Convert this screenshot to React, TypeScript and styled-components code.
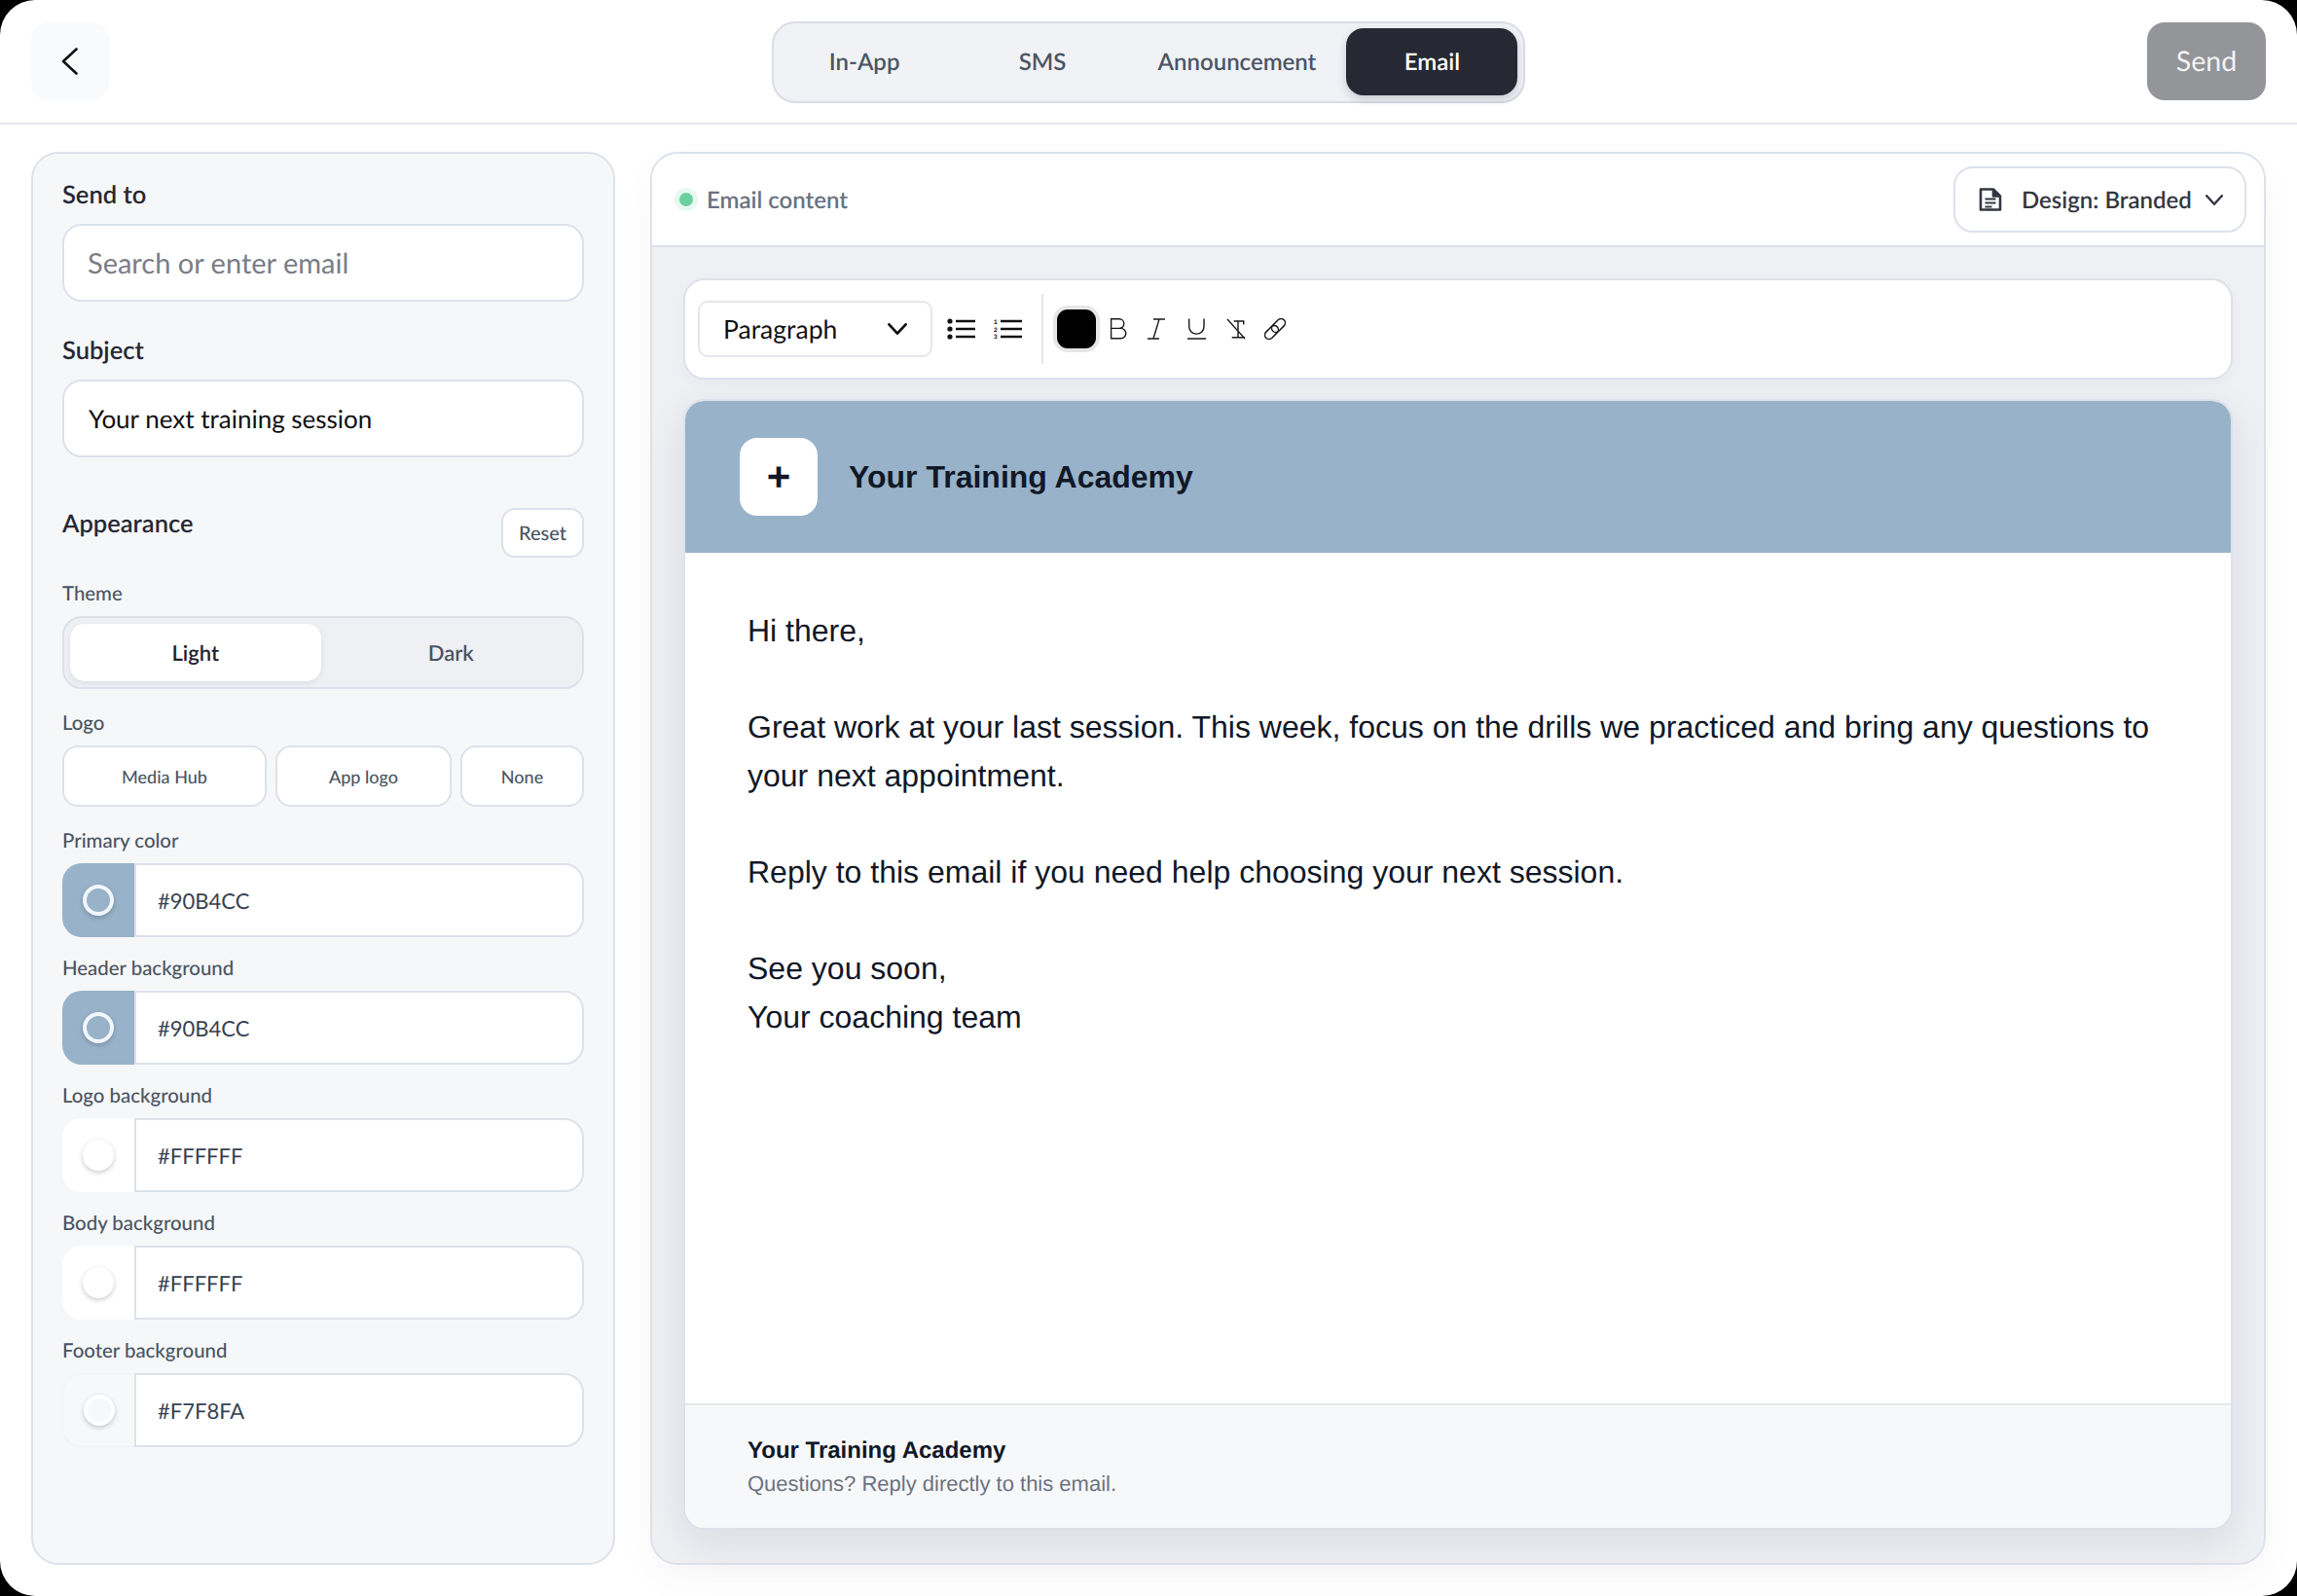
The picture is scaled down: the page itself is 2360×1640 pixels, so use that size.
import React from "react";
import styled, { createGlobalStyle } from "styled-components";

const Global = createGlobalStyle`
  html, body { margin: 0; padding: 0; background: #000; }
  * { box-sizing: border-box; }
  body {
    font-family: "Lato", "Liberation Sans", sans-serif;
    text-rendering: geometricPrecision;
  }
`;

const Screen = styled.div`
  width: 2360px;
  height: 1640px;
  background: #fff;
  border-radius: 36px;
  overflow: hidden;
  display: flex;
  flex-direction: column;
`;

const TopBar = styled.header`
  height: 128px;
  flex: none;
  border-bottom: 2px solid #e6e8ed;
  display: grid;
  grid-template-columns: 1fr auto 1fr;
  align-items: center;
  padding: 0 32px;
`;

const BackButton = styled.button`
  width: 80px;
  height: 80px;
  border: none;
  border-radius: 18px;
  background: #f9fafb;
  display: flex;
  align-items: center;
  justify-content: center;
  padding: 0;
`;

const Tabs = styled.nav`
  display: flex;
  gap: 8px;
  height: 84px;
  margin-top: 2px;
  padding: 5px 6px 6px;
  background: #f1f2f6;
  border: 2px solid #d9dde6;
  border-radius: 24px;
`;

const Tab = styled.div<{ $active?: boolean }>`
  min-width: ${(p) => (p.$active ? 176 : 175)}px;
  padding: 0 23px;
  display: flex;
  align-items: center;
  justify-content: center;
  border-radius: 18px;
  font-size: 24px;
  font-weight: 600;
  color: ${(p) => (p.$active ? "#fff" : "#4b5563")};
  background: ${(p) => (p.$active ? "#262833" : "transparent")};
  box-shadow: ${(p) => (p.$active ? "0 4px 10px rgba(17,24,39,.18)" : "none")};
`;

const SendButton = styled.button`
  justify-self: end;
  width: 122px;
  height: 80px;
  border: none;
  border-radius: 18px;
  background: #949599;
  color: #f4f4f5;
  font-family: inherit;
  font-size: 28.5px;
  font-weight: 400;
  text-rendering: geometricPrecision;
`;

const Main = styled.main`
  flex: 1;
  min-height: 0;
  display: flex;
  gap: 36px;
  padding: 28px 32px 32px;
`;

const SidePanel = styled.aside`
  width: 600px;
  flex: none;
  background: #f6f7f9;
  border: 2px solid #dde1ea;
  border-radius: 28px;
  padding: 26px 30px;
  display: flex;
  flex-direction: column;
`;

const Heading = styled.div<{ $top?: number }>`
  font-size: 25.5px;
  line-height: 33px;
  font-weight: 600;
  color: #262833;
  margin-top: ${(p) => p.$top ?? 0}px;
`;

const TextBox = styled.div<{ $placeholder?: boolean }>`
  height: 80px;
  margin-top: 13px;
  background: #fff;
  border: 2px solid #dde1ea;
  border-radius: 20px;
  padding: 0 ${(p) => (p.$placeholder ? 24 : 25)}px;
  display: flex;
  align-items: center;
  font-weight: 400;
  font-size: ${(p) => (p.$placeholder ? 29 : 26)}px;
  color: ${(p) => (p.$placeholder ? "#7a7d85" : "#111")};
`;

const AppearanceRow = styled.div`
  margin-top: 52px;
  display: flex;
  justify-content: space-between;
  align-items: flex-start;
`;

const ResetButton = styled.div`
  width: 85px;
  height: 51px;
  background: #fff;
  border: 2px solid #dde1ea;
  border-radius: 14px;
  display: flex;
  align-items: center;
  justify-content: center;
  font-size: 20px;
  font-weight: 500;
  color: #4b5563;
`;

const FieldLabel = styled.div<{ $top: number }>`
  height: 26px;
  line-height: 26px;
  margin: ${(p) => p.$top}px 0 10px;
  font-size: 20.4px;
  font-weight: 500;
  color: #4b5563;
`;

const Segmented = styled.div`
  height: 75px;
  padding: 6px;
  display: grid;
  grid-template-columns: 1fr 1fr;
  gap: 5px;
  background: #eef0f4;
  border: 2px solid #dde1ea;
  border-radius: 20px;
`;

const Segment = styled.div<{ $active?: boolean }>`
  display: flex;
  align-items: center;
  justify-content: center;
  border-radius: 15px;
  font-size: 22px;
  font-weight: 600;
  color: ${(p) => (p.$active ? "#1f2430" : "#4b5563")};
  background: ${(p) => (p.$active ? "#fff" : "transparent")};
  box-shadow: ${(p) => (p.$active ? "0 2px 6px rgba(17,24,39,.08)" : "none")};
`;

const LogoOptions = styled.div`
  display: grid;
  grid-template-columns: 210fr 181fr 127fr;
  gap: 9px;
  height: 63px;
`;

const LogoOption = styled.div`
  background: #fff;
  border: 2px solid #dde1ea;
  border-radius: 16px;
  display: flex;
  align-items: center;
  justify-content: center;
  font-size: 18px;
  font-weight: 500;
  color: #4b5563;
`;

const ColorRow = styled.div`
  height: 76px;
  display: flex;
`;

const Swatch = styled.div<{ $color: string; $edge?: boolean }>`
  width: 74px;
  flex: none;
  border-radius: 20px 0 0 20px;
  background: ${(p) => p.$color};
  border: ${(p) => (p.$edge ? "1px solid #f1f2f5" : "none")};
  border-right: none;
  display: flex;
  align-items: center;
  justify-content: center;
`;

const Knob = styled.span<{ $color: string }>`
  width: 32px;
  height: 32px;
  margin-top: -1px;
  border-radius: 50%;
  background: ${(p) => p.$color};
  border: 4px solid rgba(255, 255, 255, 0.88);
  box-shadow: 0 2px 5px rgba(17, 24, 39, 0.22);
`;

const HexInput = styled.div`
  flex: 1;
  background: #fff;
  border: 2px solid #dde1ea;
  border-radius: 0 20px 20px 0;
  padding: 0 22px;
  display: flex;
  align-items: center;
  font-size: 22px;
  font-weight: 400;
  color: #374151;
`;

const ContentPanel = styled.section`
  flex: 1;
  min-width: 0;
  display: flex;
  flex-direction: column;
  background: #eef0f4;
  border: 2px solid #dde1ea;
  border-radius: 28px;
  box-shadow: 0 16px 40px rgba(17, 24, 39, 0.035);
`;

const ContentHeader = styled.div`
  height: 96px;
  flex: none;
  background: #fff;
  border-bottom: 2px solid #dde1ea;
  border-radius: 26px 26px 0 0;
  padding: 0 18px 0 24px;
  display: flex;
  align-items: center;
  justify-content: space-between;
`;

const StatusGroup = styled.div`
  display: flex;
  align-items: center;
  gap: 14px;
`;

const StatusDot = styled.span`
  width: 14px;
  height: 14px;
  margin-left: 4px;
  border-radius: 50%;
  background: #6bd09f;
  box-shadow: 0 0 0 5px #e8f8f0;
`;

const StatusText = styled.span`
  font-size: 24px;
  font-weight: 600;
  color: #6b7280;
`;

const DesignButton = styled.div`
  width: 301px;
  height: 68px;
  background: #fff;
  border: 2px solid #dde1ea;
  border-radius: 20px;
  padding: 0 22px 0 24px;
  display: flex;
  align-items: center;
  font-size: 24px;
  font-weight: 600;
  color: #343742;
`;

const DesignLabel = styled.span`
  margin-left: 20px;
  flex: 1;
  white-space: nowrap;
`;

const ContentBody = styled.div`
  flex: 1;
  min-height: 0;
  padding: 32px 32px 34px;
  display: flex;
  flex-direction: column;
  gap: 20px;
`;

const Toolbar = styled.div`
  height: 104px;
  flex: none;
  background: #fff;
  border: 2px solid #dde1ea;
  border-radius: 22px;
  box-shadow: 0 4px 14px rgba(17, 24, 39, 0.03);
  padding: 0 13px;
  display: flex;
  align-items: center;
`;

const BlockSelect = styled.div`
  width: 241px;
  height: 58px;
  background: #fff;
  border: 2px solid #e5e7eb;
  border-radius: 10px;
  padding: 0 24px;
  display: flex;
  align-items: center;
  justify-content: space-between;
  font-size: 26.5px;
  font-weight: 400;
  color: #111;
`;

const ListGroup = styled.div`
  display: flex;
  align-items: flex-start;
  gap: 18px;
  margin-left: 15px;
`;

const Divider = styled.span`
  width: 2px;
  height: 72px;
  background: #e5e7eb;
  margin: 0 10px 0 19px;
`;

const ColorChip = styled.span`
  width: 40px;
  height: 40px;
  border-radius: 11px;
  background: #000;
  box-shadow: 0 0 0 4px #e6e6e6;
  margin: 0 3px 0 4px;
`;

const FormatGroup = styled.div`
  display: flex;
`;

const FormatButton = styled.span<{ $w: number }>`
  width: ${(p) => p.$w}px;
  height: 40px;
  display: flex;
  align-items: center;
  justify-content: center;
`;

const EmailCard = styled.article`
  flex: 1;
  min-height: 0;
  display: flex;
  flex-direction: column;
  background: #fff;
  border: 2px solid #dde1ea;
  border-radius: 22px;
  box-shadow: 0 14px 44px rgba(17, 24, 39, 0.09);
  overflow: hidden;
`;

const EmailHeader = styled.div`
  height: 156px;
  flex: none;
  background: #98b2c9;
  padding: 0 56px;
  display: flex;
  align-items: center;
  gap: 32px;
`;

const LogoTile = styled.div`
  width: 80px;
  height: 80px;
  background: #fff;
  border-radius: 18px;
  display: flex;
  align-items: center;
  justify-content: center;
  font-family: "Liberation Sans", sans-serif;
  font-size: 42px;
  font-weight: 700;
  color: #111827;
`;

const BrandName = styled.div`
  font-family: "Liberation Sans", sans-serif;
  font-size: 32px;
  font-weight: 700;
  color: #111827;
`;

const EmailBody = styled.div`
  flex: 1;
  padding: 56px 64px 0;
  font-family: "Liberation Sans", sans-serif;
  font-size: 32px;
  line-height: 49.6px;
  color: #111827;
`;

const Para = styled.p`
  margin: 0 0 49.6px;
`;

const EmailFooter = styled.footer`
  height: 128px;
  flex: none;
  background: #f7f8fa;
  border-top: 2px solid #e5e7eb;
  padding: 29px 64px 0;
  font-family: "Liberation Sans", sans-serif;
`;

const FooterName = styled.div`
  font-size: 24px;
  line-height: 35px;
  font-weight: 700;
  color: #111827;
`;

const FooterNote = styled.div`
  font-size: 22px;
  line-height: 34px;
  color: #6b7280;
`;

const Chevron = ({ w, h, color, sw }: { w: number; h: number; color: string; sw: number }) => (
  <svg width={w} height={h} viewBox={`0 0 ${w} ${h}`} fill="none">
    <polyline
      points={`${sw / 2},${sw / 2} ${w / 2},${h - sw / 2} ${w - sw / 2},${sw / 2}`}
      stroke={color}
      strokeWidth={sw}
      strokeLinecap="round"
      strokeLinejoin="round"
    />
  </svg>
);

const BackIcon = () => (
  <svg width="18" height="28" viewBox="0 0 18 28" fill="none">
    <polyline points="15.5,1.5 2,14 15.5,26.5" stroke="#111" strokeWidth="2.6" strokeLinecap="round" strokeLinejoin="round" />
  </svg>
);

const DocIcon = () => (
  <svg width="24" height="26" viewBox="0 0 24 26" fill="none" stroke="#343742" strokeWidth="2.6" strokeLinejoin="round">
    <path d="M2 2.5h13l7 7v14H2z" />
    <path d="M15 2.5v7h7" fill="#343742" />
    <path d="M6.5 12.5h11M6.5 16.5h11M6.5 20.5h7" strokeWidth="2.2" />
  </svg>
);

const BulletIcon = () => (
  <svg width="30" height="24" viewBox="0 -1 30 24" fill="#111" stroke="#111">
    <circle cx="3" cy="3" r="2.6" stroke="none" />
    <circle cx="3" cy="11" r="2.6" stroke="none" />
    <circle cx="3" cy="19" r="2.6" stroke="none" />
    <path d="M9 3h20M9 11h20M9 19h20" strokeWidth="2.3" />
  </svg>
);

const NumberIcon = () => (
  <svg width="30" height="24" viewBox="0 -1 30 24" fill="#111" stroke="#111">
    <text x="0" y="5.5" fontFamily="Liberation Sans" fontWeight="700" fontSize="6.5" stroke="none">1</text>
    <text x="0" y="13.5" fontFamily="Liberation Sans" fontWeight="700" fontSize="6.5" stroke="none">2</text>
    <text x="0" y="21.2" fontFamily="Liberation Sans" fontWeight="700" fontSize="6.5" stroke="none">3</text>
    <path d="M7 3h22M7 11h22M7 19h22" strokeWidth="2.3" />
  </svg>
);

const BoldIcon = () => (
  <svg width="18" height="22" viewBox="0 0 18 22" fill="none" stroke="#1a1a1a" strokeWidth="1.4">
    <path d="M1.6.8h8.4a4.8 4.8 0 0 1 0 9.6H1.6zM1.6 10.4h10a5.2 5.2 0 0 1 0 10.4h-10z" />
  </svg>
);

const ItalicIcon = () => (
  <svg width="20" height="22" viewBox="0 0 20 22" fill="none" stroke="#1a1a1a" strokeWidth="1.4">
    <path d="M7 1h12M1 21h12M13 1 7 21" />
  </svg>
);

const UnderlineIcon = () => (
  <svg width="23" height="22" viewBox="0 0 23 22" fill="none" stroke="#1a1a1a" strokeWidth="1.4">
    <path d="M3.7.5v8a7.65 7.65 0 0 0 15.3 0v-8M2 21h19" />
  </svg>
);

const ClearIcon = () => (
  <svg width="20" height="22" viewBox="0 0 20 22" fill="none" stroke="#1a1a1a" strokeWidth="1.4">
    <path d="M7.7 3h10v3.5M12 3v16.7M5.7 19.7H19M1 1l18 20" />
  </svg>
);

const LinkIcon = () => (
  <svg width="22" height="22" viewBox="0 0 22 22" fill="none" stroke="#1a1a1a" strokeWidth="1.5">
    <rect x="6.5" y="3.25" width="16" height="8.5" rx="4.25" transform="rotate(-45 14.5 7.5)" />
    <rect x="-0.5" y="10.25" width="16" height="8.5" rx="4.25" transform="rotate(-45 7.5 14.5)" />
  </svg>
);

const colors: { label: string; value: string; fill: string; edge?: boolean; top: number }[] = [
  { label: "Primary color", value: "#90B4CC", fill: "#98b2c9", top: 22 },
  { label: "Header background", value: "#90B4CC", fill: "#98b2c9", top: 19 },
  { label: "Logo background", value: "#FFFFFF", fill: "#ffffff", top: 19 },
  { label: "Body background", value: "#FFFFFF", fill: "#ffffff", top: 19 },
  { label: "Footer background", value: "#F7F8FA", fill: "#f7f8fa", edge: true, top: 19 },
];

export default function App() {
  return (
    <>
      <Global />
      <Screen>
        <TopBar>
          <BackButton aria-label="Back">
            <BackIcon />
          </BackButton>
          <Tabs>
            <Tab>In-App</Tab>
            <Tab>SMS</Tab>
            <Tab>Announcement</Tab>
            <Tab $active>Email</Tab>
          </Tabs>
          <SendButton>Send</SendButton>
        </TopBar>
        <Main>
          <SidePanel>
            <Heading>Send to</Heading>
            <TextBox $placeholder>Search or enter email</TextBox>
            <Heading $top={34}>Subject</Heading>
            <TextBox>Your next training session</TextBox>
            <AppearanceRow>
              <Heading>Appearance</Heading>
              <ResetButton>Reset</ResetButton>
            </AppearanceRow>
            <FieldLabel $top={24}>Theme</FieldLabel>
            <Segmented>
              <Segment $active>Light</Segment>
              <Segment>Dark</Segment>
            </Segmented>
            <FieldLabel $top={22}>Logo</FieldLabel>
            <LogoOptions>
              <LogoOption>Media Hub</LogoOption>
              <LogoOption>App logo</LogoOption>
              <LogoOption>None</LogoOption>
            </LogoOptions>
            {colors.map((c) => (
              <React.Fragment key={c.label}>
                <FieldLabel $top={c.top}>{c.label}</FieldLabel>
                <ColorRow>
                  <Swatch $color={c.fill} $edge={c.edge}>
                    <Knob $color={c.fill} />
                  </Swatch>
                  <HexInput>{c.value}</HexInput>
                </ColorRow>
              </React.Fragment>
            ))}
          </SidePanel>
          <ContentPanel>
            <ContentHeader>
              <StatusGroup>
                <StatusDot />
                <StatusText>Email content</StatusText>
              </StatusGroup>
              <DesignButton>
                <DocIcon />
                <DesignLabel>Design: Branded</DesignLabel>
                <Chevron w={18} h={11} color="#343742" sw={2.4} />
              </DesignButton>
            </ContentHeader>
            <ContentBody>
              <Toolbar>
                <BlockSelect>
                  Paragraph
                  <Chevron w={20} h={12} color="#111" sw={2.8} />
                </BlockSelect>
                <ListGroup>
                  <BulletIcon />
                  <NumberIcon />
                </ListGroup>
                <Divider />
                <ColorChip />
                <FormatGroup>
                  <FormatButton $w={40}><BoldIcon /></FormatButton>
                  <FormatButton $w={38}><ItalicIcon /></FormatButton>
                  <FormatButton $w={44}><UnderlineIcon /></FormatButton>
                  <FormatButton $w={38}><ClearIcon /></FormatButton>
                  <FormatButton $w={42}><LinkIcon /></FormatButton>
                </FormatGroup>
              </Toolbar>
              <EmailCard>
                <EmailHeader>
                  <LogoTile>+</LogoTile>
                  <BrandName>Your Training Academy</BrandName>
                </EmailHeader>
                <EmailBody>
                  <Para>Hi there,</Para>
                  <Para>
                    Great work at your last session. This week, focus on the drills we practiced and bring any questions to your next appointment.
                  </Para>
                  <Para>Reply to this email if you need help choosing your next session.</Para>
                  <Para>
                    See you soon,
                    <br />
                    Your coaching team
                  </Para>
                </EmailBody>
                <EmailFooter>
                  <FooterName>Your Training Academy</FooterName>
                  <FooterNote>Questions? Reply directly to this email.</FooterNote>
                </EmailFooter>
              </EmailCard>
            </ContentBody>
          </ContentPanel>
        </Main>
      </Screen>
    </>
  );
}
